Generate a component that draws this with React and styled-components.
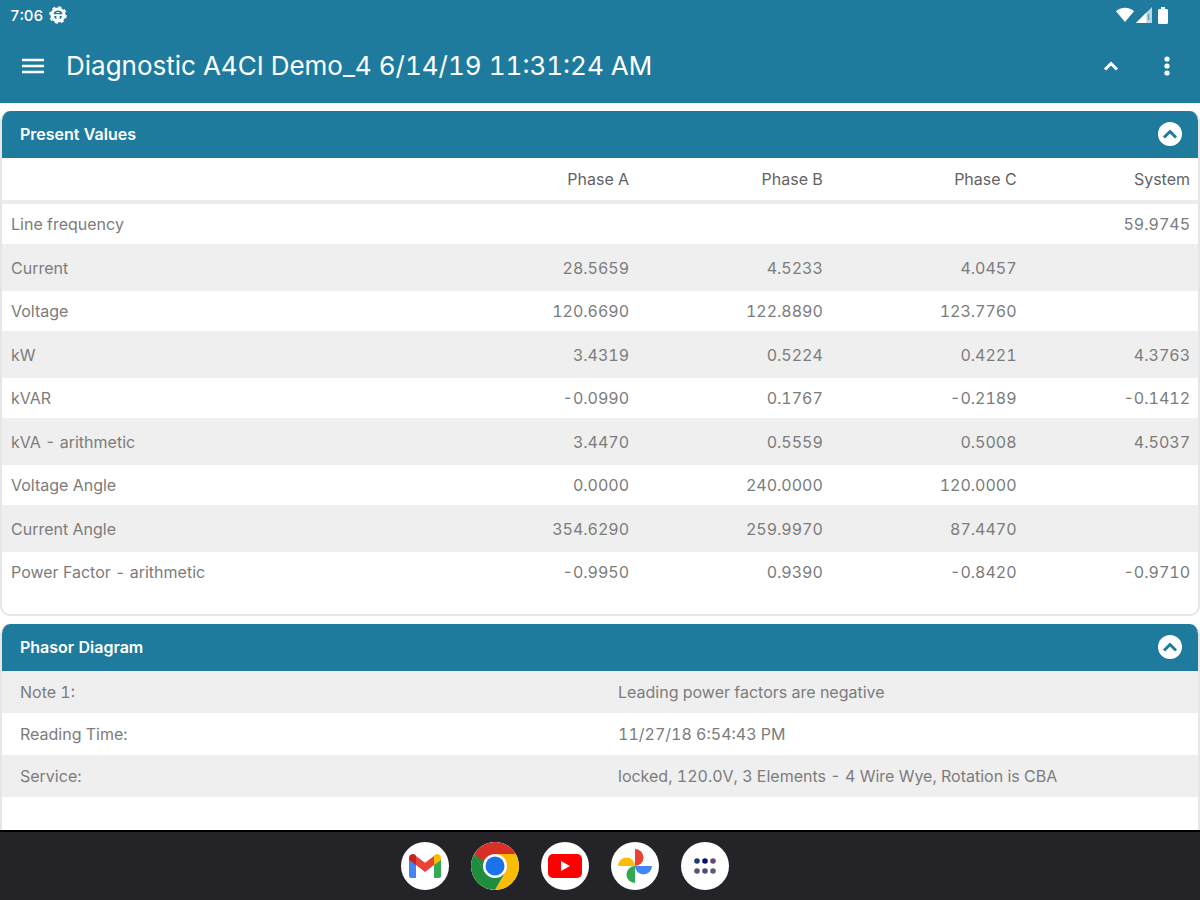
import React, { useState } from 'react'
import styled, { createGlobalStyle } from 'styled-components'

const phases = ["Phase A", "Phase B", "Phase C", "System"]

const presentValues = [
  { name: "Line frequency", values: ["", "", "", "59.9745"] },
  { name: "Current", values: ["28.5659", "4.5233", "4.0457", ""] },
  { name: "Voltage", values: ["120.6690", "122.8890", "123.7760", ""] },
  { name: "kW", values: ["3.4319", "0.5224", "0.4221", "4.3763"] },
  { name: "kVAR", values: ["-0.0990", "0.1767", "-0.2189", "-0.1412"] },
  { name: "kVA - arithmetic", values: ["3.4470", "0.5559", "0.5008", "4.5037"] },
  { name: "Voltage Angle", values: ["0.0000", "240.0000", "120.0000", ""] },
  { name: "Current Angle", values: ["354.6290", "259.9970", "87.4470", ""] },
  { name: "Power Factor - arithmetic", values: ["-0.9950", "0.9390", "-0.8420", "-0.9710"] },
]

const phasorInfo = [
  { name: "Note 1:", value: "Leading power factors are negative" },
  { name: "Reading Time:", value: "11/27/18 6:54:43 PM" },
  { name: "Service:", value: "locked, 120.0V, 3 Elements - 4 Wire Wye, Rotation is CBA" },
]

const BadgeIcon = () => (
  <svg width="18" height="18" viewBox="0 0 18 18">
    <circle cx="9" cy="9" r="7.6" fill="#fff" />
    <circle cx="9" cy="9" r="8" fill="none" stroke="#fff" strokeWidth="1.6" strokeDasharray="3.2 3.08" />
    <path d="M4.4 8.2C5 5.6 6.8 4.6 9 4.6s4 1 4.6 3.6z" fill="#1f7b9e" />
    <path d="M5 10h2.4v3.2C6 12.6 5.2 11.4 5 10zM10.6 10H13c-.2 1.4-1 2.6-2.4 3.2z" fill="#1f7b9e" />
    <path d="M7.4 6.6h3.2" stroke="#fff" strokeWidth="1" />
  </svg>
)

const WifiIcon = () => (
  <svg width="18" height="16" viewBox="0 0 18 16">
    <path d="M0 4.2C2.4 2 5.4.8 9 .8s6.600 1.200 9 3.400L9 15z" fill="#fff" />
  </svg>
)

const SignalIcon = () => (
  <svg width="16" height="16" viewBox="0 0 16 16">
    <path d="M16 0v16H0z" fill="#fff" fillOpacity=".7" />
    <path d="M10.500 5.500V16H0z" fill="#fff" />
    <path d="M12.500 7v6" stroke="#1f7b9e" strokeOpacity=".6" strokeWidth="1.500" />
  </svg>
)

const BatteryIcon = () => (
  <svg width="10" height="17" viewBox="0 0 10 17">
    <path d="M3 0h4v2h1.500C9.400 2 10 2.600 10 3.500v12c0 .9-.6 1.500-1.500 1.500h-7C.6 17 0 16.400 0 15.500v-12C0 2.600.6 2 1.500 2H3z" fill="#fff" />
  </svg>
)

const MenuIcon = () => (
  <svg width="22" height="16" viewBox="0 0 22 16">
    <path d="M0 2h22M0 8h22M0 14h22" stroke="#fff" strokeWidth="2.400" />
  </svg>
)

const DotsIcon = () => (
  <svg width="6" height="20" viewBox="0 0 6 20">
    <circle cx="3" cy="3" r="2.600" fill="#fff" />
    <circle cx="3" cy="10" r="2.600" fill="#fff" />
    <circle cx="3" cy="17" r="2.600" fill="#fff" />
  </svg>
)

const ChevronIcon = () => (
  <svg width="16" height="12" viewBox="0 0 16 12">
    <path d="M2 9.500l6-6 6 6" fill="none" stroke="currentColor" strokeWidth="3" />
  </svg>
)

const GmailIcon = () => (
  <svg width="32" height="24" viewBox="0 0 32 24">
    <path d="M0 5v17c0 1.100.9 2 2 2h5V9z" fill="#4285f4" />
    <path d="M32 5v17c0 1.100-.9 2-2 2h-5V9z" fill="#34a853" />
    <path d="M25 2v9l7-5V4c0-3.500-4-5-6.500-3z" fill="#fbbc04" />
    <path d="M7 11V2l9 6.700L25 2v9l-9 7z" fill="#ea4335" />
    <path d="M0 4v2l7 5V2L6.500 1C4-1 0 .5 0 4z" fill="#c5221f" />
  </svg>
)

const ChromeIcon = () => (
  <svg width="48" height="48" viewBox="0 0 48 48">
    <path d="M24 24L3.200 12A24 24 0 0 1 44.800 12z" fill="#d93025" />
    <path d="M24 12h20.800A24 24 0 0 1 24 48l10.400-18z" fill="#fbbc04" />
    <path d="M3.200 12A24 24 0 0 0 24 48l10.400-18L24 34 13.600 30z" fill="#1e8e3e" />
    <path d="M3.200 12H24v12l-10.400 6z" fill="#d93025" />
    <path d="M3.200 12l10.400 18L24 28z" fill="#1e8e3e" />
    <circle cx="24" cy="24" r="12" fill="#fff" />
    <circle cx="24" cy="24" r="9.500" fill="#1a73e8" />
  </svg>
)

const YoutubeIcon = () => (
  <svg width="34" height="24" viewBox="0 0 34 24">
    <rect width="34" height="24" rx="5" fill="#f00" />
    <path d="M13 7v10l9-5z" fill="#fff" />
  </svg>
)

const PhotosIcon = () => (
  <svg width="34" height="34" viewBox="0 0 34 34">
    <path d="M17 0a8.500 8.500 0 0 1 0 17z" fill="#ea4335" />
    <path d="M34 17a8.500 8.500 0 0 1-17 0z" fill="#4285f4" />
    <path d="M17 34a8.500 8.500 0 0 1 0-17z" fill="#34a853" />
    <path d="M0 17a8.500 8.500 0 0 1 17 0z" fill="#fbbc04" />
  </svg>
)

const AppsIcon = () => (
  <svg width="22" height="16" viewBox="0 0 22 16">
    <circle cx="3" cy="3" r="2.800" fill="#1f3a77" />
    <circle cx="11" cy="3" r="2.800" fill="#0b0f70" />
    <circle cx="19" cy="3" r="2.800" fill="#694a77" />
    <circle cx="3" cy="13" r="2.800" fill="#54586f" />
    <circle cx="11" cy="13" r="2.800" fill="#4a5070" />
    <circle cx="19" cy="13" r="2.800" fill="#5a5c78" />
  </svg>
)

const Panel = ({ title, grow, children }) => {
  const [open, setOpen] = useState(true)

  return (
    <Card $grow={grow}>
      <CardHeader>
        <CardTitle>{title}</CardTitle>
        <RoundButton aria-label={`Toggle ${title}`} aria-expanded={open} $open={open} onClick={() => setOpen(!open)}>
          <ChevronIcon />
        </RoundButton>
      </CardHeader>
      {open && children}
    </Card>
  )
}

const App = () => {
  return (
    <Page>
      <GlobalStyle />
      <Header>
        <StatusBar>
          <StatusGroup $gap="6px">
            <Clock>7:06</Clock>
            <BadgeIcon />
          </StatusGroup>
          <StatusGroup $gap="2px">
            <WifiIcon />
            <SignalIcon />
            <Battery>
              <BatteryIcon />
            </Battery>
          </StatusGroup>
        </StatusBar>
        <AppBar>
          <IconButton aria-label="Menu"><MenuIcon /></IconButton>
          <Title>Diagnostic A4CI Demo_4 6/14/19 11:31:24 AM</Title>
          <Actions>
            <IconButton aria-label="Collapse all"><ChevronIcon /></IconButton>
            <IconButton aria-label="More options"><DotsIcon /></IconButton>
          </Actions>
        </AppBar>
      </Header>
      <Main>
        <Panel title="Present Values">
          <ValueTable>
            <thead>
              <tr>
                <HeadCell $width="36.9%" aria-label="Quantity" />
                {phases.map((phase) => (
                  <HeadCell key={phase} scope="col" $width={phase === "System" ? "14.5%" : "16.2%"}>{phase}</HeadCell>
                ))}
              </tr>
            </thead>
            <tbody>
              {presentValues.map((row) => (
                <ValueRow key={row.name}>
                  <RowName scope="row">{row.name}</RowName>
                  {row.values.map((value, i) => (
                    <Value key={phases[i]}>{value}</Value>
                  ))}
                </ValueRow>
              ))}
            </tbody>
          </ValueTable>
        </Panel>
        <Panel title="Phasor Diagram" grow>
          <InfoTable>
            <tbody>
              {phasorInfo.map((row) => (
                <InfoRow key={row.name}>
                  <InfoName scope="row">{row.name}</InfoName>
                  <InfoValue>{row.value}</InfoValue>
                </InfoRow>
              ))}
            </tbody>
          </InfoTable>
        </Panel>
      </Main>
      <Dock>
        <DockButton aria-label="Gmail"><GmailIcon /></DockButton>
        <DockButton aria-label="Chrome"><ChromeIcon /></DockButton>
        <DockButton aria-label="YouTube"><YoutubeIcon /></DockButton>
        <DockButton aria-label="Photos"><PhotosIcon /></DockButton>
        <DockButton aria-label="All apps"><AppsIcon /></DockButton>
      </Dock>
    </Page>
  )
}

export default App

const GlobalStyle = createGlobalStyle`
  * {
    box-sizing : border-box;
  }
  body {
    margin : 0;
    font-family : Inter, "Liberation Sans", sans-serif;
    font-size : 16px;
    font-variant-numeric : tabular-nums;
    color : #7c7c7c;
    background : #fff;
  }
  button {
    padding : 0;
    border : 0;
    background : none;
    color : inherit;
    cursor : pointer;
  }
  svg {
    display : block;
  }
`

const Page = styled.div`
  display : flex;
  flex-direction : column;
  min-height : 100vh;
`

const Header = styled.header`
  color : #fff;
  background : #1f7b9e;
`

const StatusBar = styled.div`
  display : flex;
  align-items : center;
  justify-content : space-between;
  height : 30px;
  padding : 0 32px 0 10px;
`

const StatusGroup = styled.div`
  display : flex;
  align-items : center;
  gap : ${(props) => props.$gap};
`

const Battery = styled.span`
  padding-left : 4px;
`

const Clock = styled.span`
  font-size : 15px;
  font-weight : 500;
`

const AppBar = styled.div`
  display : flex;
  align-items : center;
  height : 73px;
  padding : 0 16px 2px;
  gap : 16px;
`

const IconButton = styled.button`
  display : flex;
  align-items : center;
  justify-content : center;
  width : 34px;
  height : 34px;
`

const Title = styled.h1`
  flex : 1;
  margin : 0;
  font-size : 26px;
  font-weight : 400;
  line-height : 32px;
`

const Actions = styled.div`
  display : flex;
  gap : 22px;
`

const Main = styled.main`
  display : flex;
  flex : 1;
  flex-direction : column;
  gap : 8px;
  padding-top : 8px;
`

const Card = styled.section`
  flex : ${(props) => (props.$grow ? "1" : "none")};
  overflow : hidden;
  border : 2px solid #e6e6e6;
  border-top : 0;
  border-bottom-width : ${(props) => (props.$grow ? "0" : "2px")};
  border-radius : ${(props) => (props.$grow ? "10px 10px 0 0" : "10px")};
`

const CardHeader = styled.div`
  display : flex;
  align-items : center;
  justify-content : space-between;
  height : 47px;
  padding : 0 16px 2px 18px;
  color : #fff;
  background : #1f7b9e;
`

const CardTitle = styled.h2`
  margin : 0;
  font-size : 16px;
  font-weight : 600;
`

const RoundButton = styled.button`
  display : flex;
  align-items : center;
  justify-content : center;
  width : 24px;
  height : 24px;
  border-radius : 50%;

  && {
    color : #1f7b9e;
    background : #fff;
  }
  svg {
    transform : ${(props) => (props.$open ? "none" : "rotate(180deg)")};
  }
`

const ValueTable = styled.table`
  width : 100%;
  margin-bottom : 22px;
  border-spacing : 0;
  table-layout : fixed;
`

const HeadCell = styled.th`
  width : ${(props) => props.$width};
  height : 46px;
  padding : 0 8px 0 0;
  border-bottom : 4px solid #ececec;
  font-weight : 400;
  text-align : right;
  color : #636363;
`

const ValueRow = styled.tr`
  height : 40px;

  &:nth-child(even) {
    height : 47px;
    background : #efefef;
  }
`

const RowName = styled.th`
  padding : 0 0 0 9px;
  font-weight : 400;
  text-align : left;
`

const Value = styled.td`
  padding : 0 8px 0 0;
  text-align : right;
`

const InfoTable = styled.table`
  width : 100%;
  border-spacing : 0;
  table-layout : fixed;
`

const InfoRow = styled.tr`
  height : 42px;

  &:nth-child(odd) {
    background : #efefef;
  }
`

const InfoName = styled.th`
  padding : 0 18px;
  font-weight : 400;
  text-align : left;
`

const InfoValue = styled.td`
  padding : 0 18px;
`

const Dock = styled.nav`
  display : flex;
  align-items : center;
  justify-content : center;
  gap : 22px;
  height : 70px;
  padding-right : 70px;
  border-top : 2px solid #000;
  background : #232328;
`

const DockButton = styled.button`
  display : flex;
  align-items : center;
  justify-content : center;
  width : 48px;
  height : 48px;
  border-radius : 50%;
  overflow : hidden;

  && {
    background : #fff;
  }
`
